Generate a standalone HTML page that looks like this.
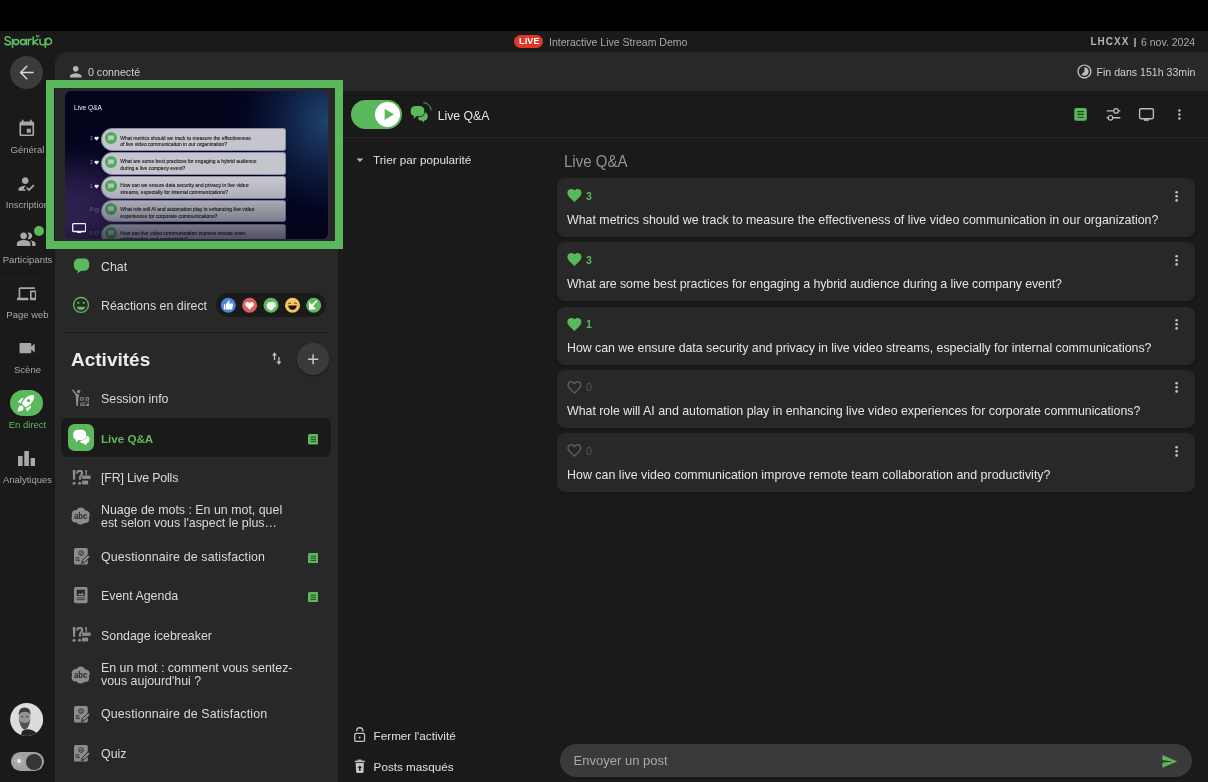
<!DOCTYPE html>
<html><head><meta charset="utf-8">
<style>
*{box-sizing:border-box;margin:0;padding:0}
html,body{width:1208px;height:782px;overflow:hidden;background:#000}
#bgfill{left:0;top:31px;width:1208px;height:751px;background:#1a1a1a}
body{position:relative;filter:grayscale(0);font-family:"Liberation Sans",sans-serif;color:#e6e6e6}
.a{position:absolute}
.t{position:absolute;white-space:nowrap;line-height:1}
svg{position:absolute;display:block}
#hdr{left:0;top:31px;width:1208px;height:21px;background:#1a1a1a}
#nav{left:0;top:52px;width:55px;height:730px;background:#1a1a1a}
#sub{left:55px;top:52px;width:1153px;height:39px;background:#282828;border-top-left-radius:12px}
#panel{left:55px;top:91px;width:283px;height:691px;background:#282828}
#main{left:338px;top:91px;width:870px;height:691px;background:#1a1a1a}
.navlbl{font-size:9.5px;color:#a8a8a8;text-align:center;width:55px;left:0}
.sep{position:absolute;left:0;width:46px;height:1px;background:#151515}
.item{font-size:12.4px;color:#dadada;left:101px}
.card{position:absolute;left:557px;width:638px;height:58.7px;background:#282828;border-radius:8px;box-shadow:0 1px 2px rgba(0,0,0,0.25)}
.q{position:absolute;left:10px;font-size:12.4px;color:#e4e4e4;white-space:nowrap;line-height:1}
.cnt{position:absolute;left:29px;font-size:10.5px;font-weight:700;color:#5cb85c;line-height:1}
.cnt0{color:#5a5a5a;font-weight:400}
</style></head>
<body>
<div id="bgfill" class="a"></div>
<!-- header -->
<div id="hdr" class="a">
  <svg style="left:0;top:0" width="60" height="21" viewBox="0 31 60 21"><g fill="none" stroke="#5cbf60" stroke-width="1.55" stroke-linecap="round" stroke-linejoin="round">
<path d="M10.3 37.9C9.7 37.1 8.7 36.7 7.6 36.7C6.1 36.7 5.1 37.5 5.1 38.7C5.1 41.3 10.5 40.4 10.5 43C10.5 44.1 9.5 44.8 7.8 44.8C6.6 44.8 5.5 44.3 4.9 43.5"/>
<path d="M12.5 39.2V47.3"/><circle cx="16.1" cy="42.05" r="2.55"/>
<circle cx="23" cy="42.05" r="2.55"/><path d="M26.3 39.2V44.7"/>
<path d="M28.4 39.2V44.7M28.4 41.8C28.4 40 29.6 39.2 31.2 39.2"/>
<path d="M33.1 36.9V44.7M37.6 39.3L33.5 42.2L37.9 44.7"/>
<path d="M36.4 35.4L37.3 36.9L38.9 35.8" stroke-width="1.1"/>
<path d="M40 39.2V42.3A2.45 2.45 0 0 0 45.4 42.3V39.2"/>
<path d="M45.4 39.2V47.3"/><path d="M45.4 42.05A3.1 3.1 0 1 1 45.41 42.1"/>
</g></svg>
  <div class="a" style="left:514px;top:3.5px;width:29px;height:13px;background:#e0372b;border-radius:7px"></div>
  <div class="t" style="left:519.1px;top:5.9px;font-size:9px;font-weight:700;color:#fff;letter-spacing:0.1px">LIVE</div>
  <div class="t" style="left:549px;top:5.5px;font-size:10.5px;color:#a9a9a9">Interactive Live Stream Demo</div>
  <div class="t" style="left:1090.5px;top:6.2px;font-size:10px;font-weight:700;color:#b5b5b5;letter-spacing:1px">LHCXX</div>
  <div class="a" style="left:1134.3px;top:6.6px;width:1.4px;height:9px;background:#8a8a8a"></div>
  <div class="t" style="left:1141px;top:5.5px;font-size:10.5px;color:#a9a9a9">6 nov. 2024</div>
</div>
<div id="nav" class="a"></div>
<div id="sub" class="a">
  <div class="t" style="left:33px;top:15px;font-size:10.65px;color:#d0d0d0">0 connecté</div>
  <div class="t" style="left:1041.5px;top:15px;font-size:10.6px;color:#d0d0d0">Fin dans 151h 33min</div>
</div>
<div id="panel" class="a"></div>
<div id="main" class="a"></div>


<!-- nav icons -->
<div class="a" style="left:10px;top:56px;width:33px;height:33px;border-radius:50%;background:#3b3b3b"></div>
<svg style="left:10px;top:56px" width="33" height="33" viewBox="10 56 33 33"><path d="M26.8 66.3L20.6 72.5L26.8 78.7M20.8 72.5H33" fill="none" stroke="#d6d6d6" stroke-width="1.6" stroke-linecap="round" stroke-linejoin="round"/></svg>
<svg style="left:16.75px;top:118.5px" width="19.56" height="19.56" viewBox="0 0 24 24"><path fill="#a8a8a8" d="M17 12h-5v5h5v-5zM16 1v2H8V1H6v2H5c-1.11 0-1.99.9-1.99 2L3 19c0 1.1.89 2 2 2h14c1.1 0 2-.9 2-2V5c0-1.1-.9-2-2-2h-1V1h-2zm3 18H5V8h14v11z"/></svg>
<svg style="left:16.2px;top:173.6px" width="20.2" height="20.2" viewBox="0 0 24 24"><path fill="#a8a8a8" d="M9 17l3-2.94c-.39-.04-.68-.06-1-.06-2.67 0-8 1.34-8 4v2h9l-3-3zm2-5c2.21 0 4-1.79 4-4s-1.79-4-4-4-4 1.79-4 4 1.79 4 4 4m4.47 8.5L12 17l1.4-1.41 2.07 2.08 5.13-5.17 1.4 1.41z"/></svg>
<svg style="left:16.35px;top:228.5px" width="20.4" height="20.4" viewBox="0 0 24 24"><path fill="#a8a8a8" d="M16.67 13.13C18.04 14.06 19 15.32 19 17v3h4v-3c0-2.18-3.57-3.47-6.33-3.87zM15 12c2.21 0 4-1.79 4-4s-1.79-4-4-4c-.47 0-.91.1-1.33.24C14.5 5.27 15 6.58 15 8s-.5 2.73-1.330 3.76c.42.14.86.24 1.33.24zm-6 0c2.21 0 4-1.79 4-4s-1.79-4-4-4-4 1.79-4 4 1.79 4 4 4zm0 1c-2.67 0-8 1.34-8 4v3h16v-3c0-2.66-5.33-4-8-4z"/></svg>
<div class="a" style="left:33.6px;top:225.9px;width:10.6px;height:10.6px;border-radius:50%;background:#5cb85c"></div>
<svg style="left:16.9px;top:283.8px" width="19.5" height="19.5" viewBox="0 0 24 24"><path fill="#a8a8a8" d="M4 6h18V4H4c-1.1 0-2 .9-2 2v11H0v3h14v-3H4V6zm19 2h-6c-.55 0-1 .45-1 1v10c0 .55.45 1 1 1h6c.55 0 1-.45 1-1V9c0-.55-.45-1-1-1zm-1 9h-4v-7h4v7z"/></svg>
<svg style="left:16.5px;top:337.6px" width="20.2" height="20.2" viewBox="0 0 24 24"><path fill="#a8a8a8" d="M17 10.5V7c0-.55-.45-1-1-1H4c-.55 0-1 .45-1 1v10c0 .55.45 1 1 1h12c.55 0 1-.45 1-1v-3.5l4 4v-11l-4 4z"/></svg>
<div class="a" style="left:10px;top:389.6px;width:33.4px;height:26.5px;border-radius:13.25px;background:#5cb85c"></div>
<svg style="left:16.3px;top:392.9px" width="20.2" height="20.2" viewBox="0 0 24 24"><path fill="#fff" d="M9.19 6.35c-2.04 2.29-3.44 5.58-3.57 5.89L2 10.69l4.05-4.05c.47-.47 1.15-.68 1.81-.55l1.33.26zM11.17 17s3.740-1.55 5.89-3.7c5.4-5.4 4.5-9.62 4.21-10.57-.95-.3-5.17-1.19-10.570 4.21C8.55 9.09 7 12.83 7 12.83L11.17 17zm6.48-2.19c-2.29 2.04-5.58 3.44-5.89 3.57L13.31 22l4.05-4.05c.47-.47.68-1.15.55-1.81l-.26-1.33zM9 18c0 .83-.34 1.58-.88 2.12C6.94 21.3 2 22 2 22s.7-4.94 1.88-6.12C4.42 15.34 5.17 15 6 15c1.66 0 3 1.34 3 3zm4-9c0-1.1.9-2 2-2s2 .9 2 2-.9 2-2 2-2-.9-2-2z"/></svg>
<svg style="left:17.8px;top:450.5px" width="17.4" height="15.2" viewBox="0 0 17.4 15.2"><g fill="#a8a8a8"><rect x="0" y="5" width="4.6" height="10.2"/><rect x="6.3" y="0" width="4.6" height="15.2"/><rect x="12.6" y="7" width="4.6" height="8.2"/></g></svg>
<div class="sep" style="top:162px"></div>
<div class="sep" style="top:272px"></div>
<div class="sep" style="top:437px"></div>


<svg style="left:10px;top:702.8px" width="33.3" height="33" viewBox="0 0 33.3 33"><defs><clipPath id="av"><circle cx="16.65" cy="16.5" r="16.5"/></clipPath></defs>
<g clip-path="url(#av)"><rect width="34" height="34" fill="#dcdcdf"/>
<path d="M10.5 34 L12 28.5 C13.5 26.8 16 26 18.5 26.2 C22 26.5 25 28 28 31.5 L29 34Z" fill="#262626"/>
<ellipse cx="14.6" cy="15" rx="5.9" ry="8.6" fill="#949494"/>
<path d="M8.8 12.5 C8.5 7.5 10.5 4.6 14.6 4.6 C18.8 4.6 20.8 7.5 20.5 12 C19.3 9.3 17.2 8.6 14.6 8.8 C12 8.8 10 9.5 8.8 12.5Z" fill="#3c3c3c"/>
<path d="M9.2 17 C10 22.5 12.2 26.5 14.8 26.5 C17.3 26.5 19.6 22.5 20.2 17 C18.8 19.2 17.2 20 14.7 20 C12.2 20 10.6 19.2 9.2 17Z" fill="#525252"/>
<ellipse cx="12.2" cy="13.6" rx="1.1" ry="0.9" fill="#4a4a4a"/><ellipse cx="17.2" cy="13.6" rx="1.1" ry="0.9" fill="#4a4a4a"/>
</g></svg>
<div class="a" style="left:11px;top:751.6px;width:32.8px;height:19.9px;border-radius:10px;background:#a2a2a2"></div>
<div class="a" style="left:26.1px;top:753.5px;width:16px;height:16px;border-radius:50%;background:#363636"></div>
<svg style="left:12.75px;top:755.4px" width="12" height="12" viewBox="-6 -6 12 12"><circle r="2.2" fill="#e6e6e6"/><g stroke="#dcdcdc" stroke-width="1" stroke-linecap="round"><path d="M0 -4.4V-4M0 4V4.4M-4.4 0H-4M4 0H4.4M-3.1 -3.1L-2.9 -2.9M3.1 3.1L2.9 2.9M-3.1 3.1L-2.9 2.9M3.1 -3.1L2.9 -2.9"/></g></svg>


<svg style="left:67px;top:63px" width="17.5" height="17.5" viewBox="0 0 24 24"><path fill="#b4b4b4" d="M12 12c2.21 0 4-1.79 4-4s-1.79-4-4-4-4 1.79-4 4 1.790 4 4 4zm0 2c-2.67 0-8 1.34-8 4v2h16v-2c0-2.66-5.33-4-8-4z"/></svg>
<svg style="left:1076.4px;top:63.2px" width="16.9" height="16.9" viewBox="0 0 24 24"><path fill="#bdbdbd" d="M16.24 7.76C15.07 6.59 13.54 6 12 6v6l-4.24 4.24c2.34 2.34 6.14 2.34 8.49 0 2.34-2.34 2.34-6.14-.01-8.48zM12 2C6.48 2 2 6.48 2 12s4.48 10 10 10 10-4.48 10-10S17.52 2 12 2zm0 18c-4.42 0-8-3.58-8-8s3.58-8 8-8 8 3.58 8 8-3.58 8-8 8z"/></svg>


<!-- main header icons -->
<div class="a" style="left:351.3px;top:99.8px;width:50.5px;height:29.2px;border-radius:14.6px;background:#5cb85c"></div>
<div class="a" style="left:375.2px;top:102px;width:24.8px;height:24.8px;border-radius:50%;background:#fff"></div>
<svg style="left:338px;top:92px" width="870" height="46" viewBox="338 92 870 46">
<path d="M384.6 108.8L393.9 114.35L384.6 119.9Z" fill="#5cb85c"/>
<path d="M421.5 112.2 h2.2 a4 4 0 0 1 4 4 v0.6 a3.8 3.8 0 0 1 -3.2 3.75 L423.6 122.3 L421.9 120.6 h-0.8 a3.3 3.3 0 0 1 -3.1 -1.9 Z" fill="#5cb85c"/>
<g fill="#5cb85c" stroke="#1a1a1a" stroke-width="1.3" paint-order="stroke">
<path d="M415.3 105.9 h4.4 a4.6 4.6 0 0 1 4.6 4.6 v1.2 a4.6 4.6 0 0 1 -4.6 4.6 h-3.2 L413.6 119.1 L414.1 116.1 a4.6 4.6 0 0 1 -3.4 -4.4 v-1.2 a4.6 4.6 0 0 1 4.6 -4.6Z"/>
</g>
<path d="M423.8 102.6 A8 8 0 0 1 431 109.8" fill="none" stroke="#3f8a43" stroke-width="1.3" stroke-linecap="round"/>
<rect x="1074.3" y="108.1" width="12.5" height="12.6" rx="2" fill="#5cb85c"/>
<g stroke="#1f3d21" stroke-width="1.1"><path d="M1077.3 111.6H1083.9M1077.3 114.4H1083.9M1077.3 117.3H1083.9"/></g>
<g stroke="#bdbdbd" fill="none" stroke-width="1.4"><path d="M1106.7 110.9H1113.6M1118.6 110.9H1120.3M1106.7 117.8H1108M1113 117.8H1120.3"/><circle cx="1116.1" cy="110.9" r="2.3" stroke-width="1.2"/><circle cx="1110.5" cy="117.8" r="2.3" stroke-width="1.2"/></g>
<rect x="1139.6" y="108.7" width="13.8" height="10" rx="1.4" fill="none" stroke="#bdbdbd" stroke-width="1.4"/>
<rect x="1143.9" y="119.2" width="5" height="1.6" fill="#bdbdbd"/>
<g fill="#bdbdbd"><circle cx="1179.4" cy="110.4" r="1.25"/><circle cx="1179.4" cy="114.5" r="1.25"/><circle cx="1179.4" cy="118.6" r="1.25"/></g>
</svg>

<!-- nav labels -->
<div class="t navlbl" style="top:145px">Général</div>
<div class="t navlbl" style="top:200px">Inscription</div>
<div class="t navlbl" style="top:255px">Participants</div>
<div class="t navlbl" style="top:310px">Page web</div>
<div class="t navlbl" style="top:365px">Scène</div>
<div class="t navlbl" style="top:420px;color:#5cb85c">En direct</div>
<div class="t navlbl" style="top:475px">Analytiques</div>

<!-- main header -->
<div class="a" style="left:338px;top:137px;width:870px;height:1px;background:#262626"></div>
<div class="t" style="left:437.7px;top:109.5px;font-size:12.25px;color:#e6e6e6">Live Q&amp;A</div>
<div class="t" style="left:373px;top:154px;font-size:11.7px;color:#e0e0e0">Trier par popularité</div>
<div class="t" style="left:563.5px;top:153.6px;font-size:16px;color:#939393;transform:scaleX(0.938);transform-origin:0 0">Live Q&amp;A</div>

<!-- cards -->
<div class="card" style="top:178.4px"><svg style="left:9px;top:9.1px" width="16.8" height="16.8" viewBox="0 0 24 24"><path fill="#5cb85c" d="M12 21.35l-1.45-1.32C5.4 15.36 2 12.28 2 8.5 2 5.42 4.42 3 7.5 3c1.74 0 3.41.81 4.5 2.09C13.09 3.81 14.76 3 16.5 3 19.58 3 22 5.42 22 8.5c0 3.78-3.4 6.86-8.55 11.54L12 21.35z"/></svg><svg style="left:616.4px;top:10.3px" width="8" height="16" viewBox="0 0 8 16"><g fill="#c4c4c4"><circle cx="3.6" cy="3.2" r="1.3"/><circle cx="3.6" cy="7.3" r="1.3"/><circle cx="3.6" cy="11.4" r="1.3"/></g></svg><div class="cnt" style="top:12.6px">3</div><div class="q" style="top:35.5px">What metrics should we track to measure the effectiveness of live video communication in our organization?</div></div>
<div class="card" style="top:242.4px"><svg style="left:9px;top:9.1px" width="16.8" height="16.8" viewBox="0 0 24 24"><path fill="#5cb85c" d="M12 21.35l-1.45-1.32C5.4 15.36 2 12.28 2 8.5 2 5.42 4.42 3 7.5 3c1.74 0 3.41.81 4.5 2.09C13.09 3.81 14.76 3 16.5 3 19.58 3 22 5.42 22 8.5c0 3.78-3.4 6.86-8.55 11.54L12 21.35z"/></svg><svg style="left:616.4px;top:10.3px" width="8" height="16" viewBox="0 0 8 16"><g fill="#c4c4c4"><circle cx="3.6" cy="3.2" r="1.3"/><circle cx="3.6" cy="7.3" r="1.3"/><circle cx="3.6" cy="11.4" r="1.3"/></g></svg><div class="cnt" style="top:12.6px">3</div><div class="q" style="top:35.5px;letter-spacing:-0.082px">What are some best practices for engaging a hybrid audience during a live company event?</div></div>
<div class="card" style="top:306.5px"><svg style="left:9px;top:9.1px" width="16.8" height="16.8" viewBox="0 0 24 24"><path fill="#5cb85c" d="M12 21.35l-1.45-1.32C5.4 15.36 2 12.28 2 8.5 2 5.42 4.42 3 7.5 3c1.74 0 3.41.81 4.5 2.09C13.09 3.81 14.76 3 16.5 3 19.58 3 22 5.42 22 8.5c0 3.78-3.4 6.86-8.55 11.54L12 21.35z"/></svg><svg style="left:616.4px;top:10.3px" width="8" height="16" viewBox="0 0 8 16"><g fill="#c4c4c4"><circle cx="3.6" cy="3.2" r="1.3"/><circle cx="3.6" cy="7.3" r="1.3"/><circle cx="3.6" cy="11.4" r="1.3"/></g></svg><div class="cnt" style="top:12.6px">1</div><div class="q" style="top:35.5px;letter-spacing:-0.035px">How can we ensure data security and privacy in live video streams, especially for internal communications?</div></div>
<div class="card" style="top:369.7px"><svg style="left:9px;top:9.1px" width="16.8" height="16.8" viewBox="0 0 24 24"><path fill="#5c5c5c" d="M16.5 3c-1.74 0-3.41.81-4.5 2.09C10.91 3.81 9.24 3 7.5 3 4.42 3 2 5.420 2 8.5c0 3.78 3.4 6.86 8.55 11.54L12 21.35l1.45-1.32C18.6 15.36 22 12.28 22 8.5 22 5.42 19.58 3 16.5 3zm-4.4 15.55l-.1.1-.1-.1C7.14 14.24 4 11.39 4 8.5 4 6.5 5.5 5 7.5 5c1.54 0 3.04.99 3.57 2.36h1.87C13.46 5.99 14.96 5 16.5 5c2 0 3.5 1.5 3.5 3.5 0 2.89-3.14 5.74-7.9 10.05z"/></svg><svg style="left:616.4px;top:10.3px" width="8" height="16" viewBox="0 0 8 16"><g fill="#c4c4c4"><circle cx="3.6" cy="3.2" r="1.3"/><circle cx="3.6" cy="7.3" r="1.3"/><circle cx="3.6" cy="11.4" r="1.3"/></g></svg><div class="cnt cnt0" style="top:12.6px">0</div><div class="q" style="top:35.5px;letter-spacing:-0.024px">What role will AI and automation play in enhancing live video experiences for corporate communications?</div></div>
<div class="card" style="top:433.4px"><svg style="left:9px;top:9.1px" width="16.8" height="16.8" viewBox="0 0 24 24"><path fill="#5c5c5c" d="M16.5 3c-1.74 0-3.41.81-4.5 2.09C10.91 3.81 9.24 3 7.5 3 4.42 3 2 5.420 2 8.5c0 3.78 3.4 6.86 8.55 11.54L12 21.35l1.45-1.32C18.6 15.36 22 12.28 22 8.5 22 5.42 19.58 3 16.5 3zm-4.4 15.55l-.1.1-.1-.1C7.14 14.24 4 11.39 4 8.5 4 6.5 5.5 5 7.5 5c1.54 0 3.04.99 3.57 2.36h1.87C13.46 5.99 14.96 5 16.5 5c2 0 3.5 1.5 3.5 3.5 0 2.89-3.14 5.74-7.9 10.05z"/></svg><svg style="left:616.4px;top:10.3px" width="8" height="16" viewBox="0 0 8 16"><g fill="#c4c4c4"><circle cx="3.6" cy="3.2" r="1.3"/><circle cx="3.6" cy="7.3" r="1.3"/><circle cx="3.6" cy="11.4" r="1.3"/></g></svg><div class="cnt cnt0" style="top:12.6px">0</div><div class="q" style="top:35.5px;letter-spacing:0.025px">How can live video communication improve remote team collaboration and productivity?</div></div>

<!-- bottom actions -->
<div class="t" style="left:373.6px;top:729.8px;font-size:11.7px;color:#e0e0e0">Fermer l'activité</div>
<div class="t" style="left:373.6px;top:760.8px;font-size:11.7px;color:#e0e0e0">Posts masqués</div>
<div class="a" style="left:560px;top:744px;width:631.5px;height:33px;border-radius:16.5px;background:#3a3a3a"></div>
<div class="t" style="left:573.6px;top:754.3px;font-size:13px;color:#a8a8a8">Envoyer un post</div>

<!-- panel -->
<div class="t item" style="top:261px">Chat</div>
<div class="t item" style="top:300px">Réactions en direct</div>
<div class="a" style="left:65px;top:331.5px;width:263px;height:1.5px;background:#1a1a1a"></div>
<div class="t" style="left:71px;top:349.5px;font-size:19px;font-weight:700;color:#ececec">Activités</div>
<div class="a" style="left:297px;top:343px;width:32px;height:32px;border-radius:50%;background:#3a3a3a"></div>
<div class="t item" style="top:392.5px">Session info</div>
<div class="a" style="left:61.3px;top:418px;width:269.5px;height:39px;border-radius:6px;background:#1a1a1a"></div>
<div class="t item" style="top:433.2px;color:#5cb85c;font-weight:700;font-size:11.6px">Live Q&amp;A</div>
<div class="t item" style="top:472px;letter-spacing:-0.18px">[FR] Live Polls</div>
<div class="t item" style="top:504px">Nuage de mots : En un mot, quel</div>
<div class="t item" style="top:517.2px">est selon vous l'aspect le plus…</div>
<div class="t item" style="top:550.5px;letter-spacing:0.15px">Questionnaire de satisfaction</div>
<div class="t item" style="top:590px">Event Agenda</div>
<div class="t item" style="top:630.3px">Sondage icebreaker</div>
<div class="t item" style="top:661.8px">En un mot : comment vous sentez-</div>
<div class="t item" style="top:675px">vous aujourd'hui ?</div>
<div class="t item" style="top:708px;letter-spacing:0.15px">Questionnaire de Satisfaction</div>
<div class="t item" style="top:747.5px">Quiz</div>

<div class="a" id="prev" style="left:64.5px;top:91.4px;width:263.7px;height:148px;border-radius:6px;overflow:hidden;background:#03031c">
<div class="a" style="left:0;top:0;width:100%;height:100%;background:radial-gradient(ellipse 105px 115px at 262px 30px, rgba(38,88,140,0.75), rgba(28,62,110,0.4) 45%, rgba(10,20,60,0.12) 80%, rgba(0,0,0,0) 100%)"></div>
<div class="a" style="left:0;top:0;width:100%;height:100%;background:radial-gradient(ellipse 130px 115px at 5px 150px, rgba(100,68,140,0.85), rgba(72,48,112,0.5) 50%, rgba(30,20,70,0.15) 80%, rgba(0,0,0,0) 100%)"></div>
<div class="t" style="left:9.6px;top:13.4px;font-size:6.6px;color:#f0f0f0">Live Q&amp;A</div>
<div class="a" style="left:36.9px;top:37.0px;width:184.4px;height:22.4px;background:#c5c5ce;border-radius:11.2px 2.5px 2.5px 11.2px;border:0.6px solid #8a8aa8"></div>
<svg style="left:40.3px;top:40.4px" width="12" height="12" viewBox="0 0 12 12"><circle cx="6" cy="6" r="6" fill="#4cae55"/><path d="M3.2 3.5h5.6v4.3H4.6L3.2 9.2Z" fill="#c6c6d0"/></svg>
<div class="t" style="left:55.8px;top:43.2px;font-size:5px;color:#1e1e1e;line-height:6.6px;-webkit-text-stroke:0.12px #1e1e1e">What metrics should we track to measure the effectiveness<br>of live video communication in our organization?</div>
<div class="t" style="left:25.6px;top:45.4px;font-size:4.6px;color:#9a9ab0">3</div>
<svg style="left:29.9px;top:44.9px" width="5.2" height="5.2" viewBox="0 0 24 24"><path fill="#f4f4f4" d="M12 21.35l-1.45-1.32C5.4 15.36 2 12.28 2 8.5 2 5.42 4.42 3 7.5 3c1.74 0 3.41.81 4.5 2.09C13.09 3.81 14.76 3 16.5 3 19.58 3 22 5.42 22 8.5c0 3.78-3.4 6.86-8.55 11.54L12 21.35z"/></svg>
<div class="a" style="left:36.9px;top:60.9px;width:184.4px;height:22.4px;background:#c5c5ce;border-radius:11.2px 2.5px 2.5px 11.2px;border:0.6px solid #8a8aa8"></div>
<svg style="left:40.3px;top:64.3px" width="12" height="12" viewBox="0 0 12 12"><circle cx="6" cy="6" r="6" fill="#4cae55"/><path d="M3.2 3.5h5.6v4.3H4.6L3.2 9.2Z" fill="#c6c6d0"/></svg>
<div class="t" style="left:55.8px;top:67.1px;font-size:5px;color:#1e1e1e;line-height:6.6px;-webkit-text-stroke:0.12px #1e1e1e">What are some best practices for engaging a hybrid audience<br>during a live company event?</div>
<div class="t" style="left:25.6px;top:69.3px;font-size:4.6px;color:#9a9ab0">3</div>
<svg style="left:29.9px;top:68.8px" width="5.2" height="5.2" viewBox="0 0 24 24"><path fill="#f4f4f4" d="M12 21.35l-1.45-1.32C5.4 15.36 2 12.28 2 8.5 2 5.42 4.42 3 7.5 3c1.74 0 3.41.81 4.5 2.09C13.09 3.81 14.76 3 16.5 3 19.58 3 22 5.42 22 8.5c0 3.78-3.4 6.86-8.55 11.54L12 21.35z"/></svg>
<div class="a" style="left:36.9px;top:84.8px;width:184.4px;height:22.4px;background:#c5c5ce;border-radius:11.2px 2.5px 2.5px 11.2px;border:0.6px solid #8a8aa8"></div>
<svg style="left:40.3px;top:88.2px" width="12" height="12" viewBox="0 0 12 12"><circle cx="6" cy="6" r="6" fill="#4cae55"/><path d="M3.2 3.5h5.6v4.3H4.6L3.2 9.2Z" fill="#c6c6d0"/></svg>
<div class="t" style="left:55.8px;top:91.0px;font-size:5px;color:#1e1e1e;line-height:6.6px;-webkit-text-stroke:0.12px #1e1e1e">How can we ensure data security and privacy in live video<br>streams, especially for internal communications?</div>
<div class="t" style="left:25.6px;top:93.2px;font-size:4.6px;color:#9a9ab0">1</div>
<svg style="left:29.9px;top:92.7px" width="5.2" height="5.2" viewBox="0 0 24 24"><path fill="#f4f4f4" d="M12 21.35l-1.45-1.32C5.4 15.36 2 12.28 2 8.5 2 5.42 4.42 3 7.5 3c1.74 0 3.41.81 4.5 2.09C13.09 3.81 14.76 3 16.5 3 19.58 3 22 5.42 22 8.5c0 3.78-3.4 6.86-8.55 11.54L12 21.35z"/></svg>
<div class="a" style="left:36.9px;top:108.6px;width:184.4px;height:22.4px;background:#c5c5ce;border-radius:11.2px 2.5px 2.5px 11.2px;border:0.6px solid #8a8aa8"></div>
<svg style="left:40.3px;top:112.0px" width="12" height="12" viewBox="0 0 12 12"><circle cx="6" cy="6" r="6" fill="#4cae55"/><path d="M3.2 3.5h5.6v4.3H4.6L3.2 9.2Z" fill="#c6c6d0"/></svg>
<div class="t" style="left:55.8px;top:114.8px;font-size:5px;color:#1e1e1e;line-height:6.6px;-webkit-text-stroke:0.12px #1e1e1e">What role will AI and automation play in enhancing live video<br>experiences for corporate communications?</div>
<div class="t" style="left:25.6px;top:117.0px;font-size:4.6px;color:#9a9ab0">0</div>
<svg style="left:29.9px;top:116.5px" width="5.2" height="5.2" viewBox="0 0 24 24"><path fill="none" stroke="#b0b0c0" stroke-width="2.5" d="M12 21.35l-1.45-1.32C5.4 15.36 2 12.28 2 8.5 2 5.42 4.42 3 7.5 3c1.74 0 3.41.81 4.5 2.09C13.09 3.81 14.76 3 16.5 3 19.58 3 22 5.42 22 8.5c0 3.78-3.4 6.86-8.55 11.54L12 21.35z"/></svg>
<div class="a" style="left:36.9px;top:132.2px;width:184.4px;height:22.4px;background:#c5c5ce;border-radius:11.2px 2.5px 2.5px 11.2px;border:0.6px solid #8a8aa8"></div>
<svg style="left:40.3px;top:135.6px" width="12" height="12" viewBox="0 0 12 12"><circle cx="6" cy="6" r="6" fill="#4cae55"/><path d="M3.2 3.5h5.6v4.3H4.6L3.2 9.2Z" fill="#c6c6d0"/></svg>
<div class="t" style="left:55.8px;top:138.4px;font-size:5px;color:#1e1e1e;line-height:6.6px;-webkit-text-stroke:0.12px #1e1e1e">How can live video communication improve remote team<br>collaboration and productivity?</div>
<div class="t" style="left:25.6px;top:140.6px;font-size:4.6px;color:#9a9ab0">0</div>
<svg style="left:29.9px;top:140.1px" width="5.2" height="5.2" viewBox="0 0 24 24"><path fill="none" stroke="#b0b0c0" stroke-width="2.5" d="M12 21.35l-1.45-1.32C5.4 15.36 2 12.28 2 8.5 2 5.42 4.42 3 7.5 3c1.74 0 3.41.81 4.5 2.09C13.09 3.81 14.76 3 16.5 3 19.58 3 22 5.42 22 8.5c0 3.78-3.4 6.86-8.55 11.54L12 21.35z"/></svg>
<div class="a" style="left:0;top:0;width:100%;height:100%;background:linear-gradient(to bottom, rgba(3,3,28,0) 0px, rgba(3,3,28,0) 88px, rgba(3,3,28,0.14) 110px, rgba(3,3,28,0.36) 130px, rgba(3,3,28,0.6) 148px)"></div>
<svg style="left:7.3px;top:131.4px" width="14.4" height="10.2" viewBox="0 0 14.4 10.2"><rect x="0.7" y="0.7" width="13" height="7.8" rx="0.8" fill="none" stroke="#f2f2f2" stroke-width="1.3"/><rect x="5.2" y="8.6" width="4" height="1.5" fill="#f2f2f2"/></svg>
</div>


<!-- main misc icons -->
<svg style="left:355px;top:157px" width="10" height="6" viewBox="355 157 10 6"><path d="M356.6 158.5H363.2L359.9 161.9Z" fill="#bdbdbd"/></svg>
<svg style="left:352px;top:726px" width="16" height="50" viewBox="352 726 16 50">
<rect x="354.75" y="733.35" width="9.8" height="8.1" rx="1.3" fill="none" stroke="#c4c4c4" stroke-width="1.3"/>
<circle cx="359.6" cy="737.4" r="1" fill="#c4c4c4"/>
<path d="M356.6 731.2 V730.9 A3.15 3.15 0 0 1 362.9 730.9 V731.7" fill="none" stroke="#c4c4c4" stroke-width="1.3"/>
<rect x="354.8" y="760.7" width="10" height="1.5" fill="#c4c4c4"/><rect x="357.6" y="759.6" width="4" height="1.3" fill="#c4c4c4"/>
<path d="M355.7 763 H363.9 L363.5 772.1 Q363.4 772.9 362.6 772.9 H357 Q356.2 772.9 356.1 772.1Z" fill="#c4c4c4"/>
<path d="M359.8 765.4 L362 768 H360.6 V770.8 H359 V768 H357.6Z" fill="#1a1a1a"/>
</svg>
<svg style="left:1161.3px;top:752.5px" width="16.8" height="16.8" viewBox="0 0 24 24"><path fill="#5cb85c" d="M2.01 21L23 12 2.01 3 2 10l15 2-15 2z"/></svg>

<!-- panel icons -->
<svg style="left:72.5px;top:257.5px" width="17" height="16" viewBox="0 0 17 16"><rect x="0.9" y="0.6" width="15.3" height="12.1" rx="4.6" fill="#5cb85c"/><path d="M5 12 L4.1 15.5 L9.2 12Z" fill="#5cb85c"/></svg>
<svg style="left:72px;top:296.3px" width="18" height="18" viewBox="0 0 18 18"><circle cx="9" cy="8.9" r="7.45" fill="none" stroke="#5cb85c" stroke-width="1.35"/><circle cx="6.3" cy="6.8" r="1.15" fill="#5cb85c"/><circle cx="11.75" cy="6.8" r="1.15" fill="#5cb85c"/><path d="M4.6 10.7 H13.4 C12.9 12.9 11.2 14 9 14 C6.8 14 5.1 12.9 4.6 10.7Z" fill="#5cb85c"/></svg>
<div class="a" style="left:216.2px;top:293.1px;width:109.7px;height:24px;border-radius:12px;background:#1a1a1a"></div>
<svg style="left:216px;top:293px" width="110" height="24" viewBox="216 293 110 24">
<circle cx="228.3" cy="305.2" r="7.5" fill="#4a88db"/>
<g fill="#fff"><rect x="223.9" y="304.3" width="1.5" height="5.2"/><path d="M226 304.2 L228.3 300.9 C228.8 300.2 229.6 300.5 229.6 301.3 L229.3 303.4 H232.2 C232.8 303.4 233.1 303.9 233 304.4 L232.2 308.8 C232.1 309.3 231.8 309.5 231.3 309.5 H226Z"/></g>
<circle cx="249.6" cy="305.2" r="7.5" fill="#e35d5d"/>
<path d="M249.6 309.6 L246 306.1 C244.6 304.7 245.3 302.1 247.3 302 C248.3 301.9 249.1 302.5 249.6 303.3 C250.1 302.5 250.9 301.9 251.9 302 C253.9 302.1 254.6 304.7 253.2 306.1Z" fill="#fff"/>
<circle cx="271" cy="305.2" r="7.5" fill="#5cb85c"/>
<g fill="#fff"><path d="M266.5 304.5 L268.8 301.8 L270.5 302.5 L272.2 301.4 L273.6 302.6 L274.7 306.6 L272.8 309.8 L270.6 310.4 L267.4 308.5Z" opacity="0.9"/><path d="M273.2 301.6 L275.4 302.3 L276.2 306 L274.6 308.6Z" opacity="0.7"/></g>
<circle cx="292.5" cy="305.2" r="7.5" fill="#f3c75c"/>
<g fill="none" stroke="#3a2a10" stroke-width="0.9" stroke-linecap="round"><path d="M288.5 303.3 Q289.6 302.1 290.7 303.3"/><path d="M294.3 303.3 Q295.4 302.1 296.5 303.3"/></g>
<path d="M288.2 305.6 H296.8 C296.6 308.2 294.8 309.9 292.5 309.9 C290.2 309.9 288.4 308.2 288.2 305.6Z" fill="#1d1408"/>
<circle cx="313.7" cy="305.2" r="7.5" fill="#5cb85c"/>
<path d="M309 301.6 L311.5 304.4 L316.6 300 L317.6 300.9 L313.2 305.9 L316.2 309.3 L309.1 309.7Z" fill="#fff"/>
</svg>
<svg style="left:270px;top:351px" width="14" height="15" viewBox="270 351 14 15"><g fill="#c2c2c2"><path d="M274.5 352.3 L277 355.6 H275.15 V360 H273.85 V355.6 H272Z"/><path d="M278.9 364.8 L281.4 361.5 H279.55 V357.1 H278.25 V361.5 H276.4Z"/></g></svg>
<div class="a" style="left:296.9px;top:342.6px;width:32.3px;height:32.3px;border-radius:50%;background:#3a3a3a;box-shadow:0 1px 2px rgba(0,0,0,0.35)"></div>
<svg style="left:296.9px;top:342.6px" width="32.3" height="32.3" viewBox="296.9 342.6 32.3 32.3"><path d="M313 353.8V363.9M307.9 358.85H318.1" stroke="#c8c8c8" stroke-width="1.5"/></svg>
<svg style="left:71px;top:389px" width="20" height="18" viewBox="71 389 20 18"><g fill="#8c8c8c"><circle cx="78.6" cy="391.6" r="1.75"/><path d="M75.5 394.2 H79.2 L78.5 398.5 L77.9 406 H76.3 L75.9 398.5Z"/></g><path d="M72.9 390.2 L76.6 395" stroke="#8c8c8c" stroke-width="1.5" stroke-linecap="round"/>
<g fill="#8c8c8c"><rect x="80.3" y="397.2" width="3.4" height="3.4"/><rect x="85.6" y="397.2" width="3.4" height="3.4"/><rect x="80.3" y="402.6" width="3.4" height="3.4"/><rect x="84.3" y="401.8" width="1.2" height="1.2"/><rect x="86.3" y="403.8" width="2.7" height="2.2"/><rect x="83.9" y="404.6" width="1.4" height="1.4"/><rect x="87.6" y="401.5" width="1.4" height="1.4"/></g>
<g fill="#282828"><rect x="81.2" y="398.1" width="1.6" height="1.6"/><rect x="86.5" y="398.1" width="1.6" height="1.6"/><rect x="81.2" y="403.5" width="1.6" height="1.6"/></g></svg>
<div class="a" style="left:67.9px;top:423.9px;width:25.8px;height:27.2px;border-radius:6.5px;background:#5cb85c"></div>
<svg style="left:67.9px;top:423.9px" width="26" height="28" viewBox="67.9 423.9 26 28">
<path d="M83 435.6 h2.6 a3.9 3.9 0 0 1 3.9 3.9 a3.9 3.9 0 0 1 -3 3.8 L85.4 445.3 L84.2 443.3 h-1.2 a3.9 3.9 0 0 1 -3 -1.4Z" fill="#fff"/>
<path d="M77.6 429.7 h4 a4.5 4.5 0 0 1 4.5 4.5 v1.2 a4.5 4.5 0 0 1 -4.5 4.5 h-3.3 L75.7 442.4 L76 439.7 a4.5 4.5 0 0 1 -2.9 -4.3 v-1.2 a4.5 4.5 0 0 1 4.5 -4.5Z" fill="#fff" stroke="#5cb85c" stroke-width="1.1" paint-order="stroke"/>
</svg>
<svg style="left:307.8px;top:434px" width="10.6" height="10.5" viewBox="0 0 10.6 10.5"><rect width="10.6" height="10.5" rx="1.6" fill="#5cb85c"/><g stroke="#1f3a22" stroke-width="0.9"><path d="M2.6 3.1H8M2.6 5.25H8M2.6 7.4H8"/></g></svg>
<svg style="left:71.5px;top:469.9px" width="20" height="16" viewBox="0 0 20 16"><g fill="#8c8c8c">
<path d="M0.7 0.1H3.5L3.1 9.7H1.1Z"/><circle cx="2.1" cy="13.2" r="1.55"/>
<circle cx="7.6" cy="13.2" r="1.55"/>
<path d="M13.3 0.1H15L14.8 5H13.5Z"/>
<rect x="10.1" y="5.5" width="8.5" height="3.4"/><rect x="10.1" y="10.6" width="6" height="3.8"/>
</g><path d="M5.2 3.4C5.2 1.6 6.3 0.9 7.7 0.9C9.2 0.9 10.2 1.8 10.2 3.1C10.2 4.9 8.2 5.3 8 7.3V9.7" fill="none" stroke="#8c8c8c" stroke-width="2.2"/></svg>
<svg style="left:71.2px;top:507.3px" width="19.4" height="18" viewBox="0 0 19.4 18">
<g fill="#8c8c8c"><circle cx="9.8" cy="5" r="4.6"/><circle cx="5" cy="7.2" r="4.2"/><circle cx="14.6" cy="7.6" r="4.2"/><circle cx="4.6" cy="11.6" r="4"/><circle cx="14.2" cy="12" r="4"/><circle cx="9.6" cy="13" r="4.6"/><circle cx="9.7" cy="9" r="5"/></g>
<text x="9.7" y="11.9" text-anchor="middle" font-family="Liberation Sans" font-weight="700" font-size="8.2" fill="#282828" textLength="13.6" lengthAdjust="spacingAndGlyphs">abc</text></svg>
<svg style="left:74.1px;top:547.8px" width="17" height="17" viewBox="0 0 17 17">
<rect x="0" y="0" width="13.8" height="16.5" rx="1.6" fill="#8c8c8c"/><circle cx="7.1" cy="5.1" r="2.3" fill="none" stroke="#282828" stroke-width="0.9"/><circle cx="6.3" cy="4.7" r="0.45" fill="#282828"/><circle cx="7.9" cy="4.7" r="0.45" fill="#282828"/><path d="M6 5.8 Q7.1 6.9 8.2 5.8" fill="none" stroke="#282828" stroke-width="0.6"/>
<g stroke="#282828" stroke-width="0.7"><path d="M1.6 9.6H5.2M1.6 11.1H5.5M1.6 12.6H6"/></g>
<path d="M7.6 15.6 L8.3 12.6 L14.1 6.8 L16.1 8.8 L10.3 14.6Z" fill="#8c8c8c" stroke="#282828" stroke-width="1"/>
<path d="M8.6 14.4 L9.6 13.4" stroke="#282828" stroke-width="0.6"/>
</svg>
<svg style="left:307.8px;top:552.5px" width="10.6" height="10.5" viewBox="0 0 10.6 10.5"><rect width="10.6" height="10.5" rx="1.6" fill="#5cb85c"/><g stroke="#1f3a22" stroke-width="0.9"><path d="M2.6 3.1H8M2.6 5.25H8M2.6 7.4H8"/></g></svg>
<svg style="left:74.1px;top:587.4px" width="13.6" height="16.2" viewBox="0 0 13.6 16.2"><rect width="13.6" height="16.2" rx="1.6" fill="#8c8c8c"/><rect x="2.7" y="2.7" width="8.2" height="6.2" fill="#282828"/><path d="M3.6 8.2 L5.6 6.2 L7 7.3 L8.6 5.4 L10.1 8.2Z" fill="#8c8c8c"/><g stroke="#282828" stroke-width="0.8"><path d="M2.7 10.9H10.9M2.7 12.7H10.9"/></g></svg>
<svg style="left:307.8px;top:591.5px" width="10.6" height="10.5" viewBox="0 0 10.6 10.5"><rect width="10.6" height="10.5" rx="1.6" fill="#5cb85c"/><g stroke="#1f3a22" stroke-width="0.9"><path d="M2.6 3.1H8M2.6 5.25H8M2.6 7.4H8"/></g></svg>
<svg style="left:71.5px;top:627.3px" width="20" height="16" viewBox="0 0 20 16"><g fill="#8c8c8c">
<path d="M0.7 0.1H3.5L3.1 9.7H1.1Z"/><circle cx="2.1" cy="13.2" r="1.55"/>
<circle cx="7.6" cy="13.2" r="1.55"/>
<path d="M13.3 0.1H15L14.8 5H13.5Z"/>
<rect x="10.1" y="5.5" width="8.5" height="3.4"/><rect x="10.1" y="10.6" width="6" height="3.8"/>
</g><path d="M5.2 3.4C5.2 1.6 6.3 0.9 7.7 0.9C9.2 0.9 10.2 1.8 10.2 3.1C10.2 4.9 8.2 5.3 8 7.3V9.7" fill="none" stroke="#8c8c8c" stroke-width="2.2"/></svg>
<svg style="left:71.2px;top:665.5px" width="19.4" height="18" viewBox="0 0 19.4 18">
<g fill="#8c8c8c"><circle cx="9.8" cy="5" r="4.6"/><circle cx="5" cy="7.2" r="4.2"/><circle cx="14.6" cy="7.6" r="4.2"/><circle cx="4.6" cy="11.6" r="4"/><circle cx="14.2" cy="12" r="4"/><circle cx="9.6" cy="13" r="4.6"/><circle cx="9.7" cy="9" r="5"/></g>
<text x="9.7" y="11.9" text-anchor="middle" font-family="Liberation Sans" font-weight="700" font-size="8.2" fill="#282828" textLength="13.6" lengthAdjust="spacingAndGlyphs">abc</text></svg>
<svg style="left:74.1px;top:705.7px" width="17" height="17" viewBox="0 0 17 17">
<rect x="0" y="0" width="13.8" height="16.5" rx="1.6" fill="#8c8c8c"/><circle cx="7.1" cy="5.1" r="2.3" fill="none" stroke="#282828" stroke-width="0.9"/><circle cx="6.3" cy="4.7" r="0.45" fill="#282828"/><circle cx="7.9" cy="4.7" r="0.45" fill="#282828"/><path d="M6 5.8 Q7.1 6.9 8.2 5.8" fill="none" stroke="#282828" stroke-width="0.6"/>
<g stroke="#282828" stroke-width="0.7"><path d="M1.6 9.6H5.2M1.6 11.1H5.5M1.6 12.6H6"/></g>
<path d="M7.6 15.6 L8.3 12.6 L14.1 6.8 L16.1 8.8 L10.3 14.6Z" fill="#8c8c8c" stroke="#282828" stroke-width="1"/>
<path d="M8.6 14.4 L9.6 13.4" stroke="#282828" stroke-width="0.6"/>
</svg>
<svg style="left:74.1px;top:745.1px" width="17" height="17" viewBox="0 0 17 17">
<rect x="0" y="0" width="13.8" height="16.5" rx="1.6" fill="#8c8c8c"/><circle cx="7.1" cy="5.1" r="2.3" fill="none" stroke="#282828" stroke-width="0.9"/><path d="M5.9 5.1L6.8 6L8.4 4.3" fill="none" stroke="#282828" stroke-width="0.8"/>
<g stroke="#282828" stroke-width="0.7"><path d="M1.6 9.6H5.2M1.6 11.1H5.5M1.6 12.6H6"/></g>
<path d="M7.6 15.6 L8.3 12.6 L14.1 6.8 L16.1 8.8 L10.3 14.6Z" fill="#8c8c8c" stroke="#282828" stroke-width="1"/>
<path d="M8.6 14.4 L9.6 13.4" stroke="#282828" stroke-width="0.6"/>
</svg>

<!-- green highlight box -->
<div class="a" style="left:46px;top:80px;width:297px;height:169px;border:8px solid #5cb85c"></div>
</body></html>
